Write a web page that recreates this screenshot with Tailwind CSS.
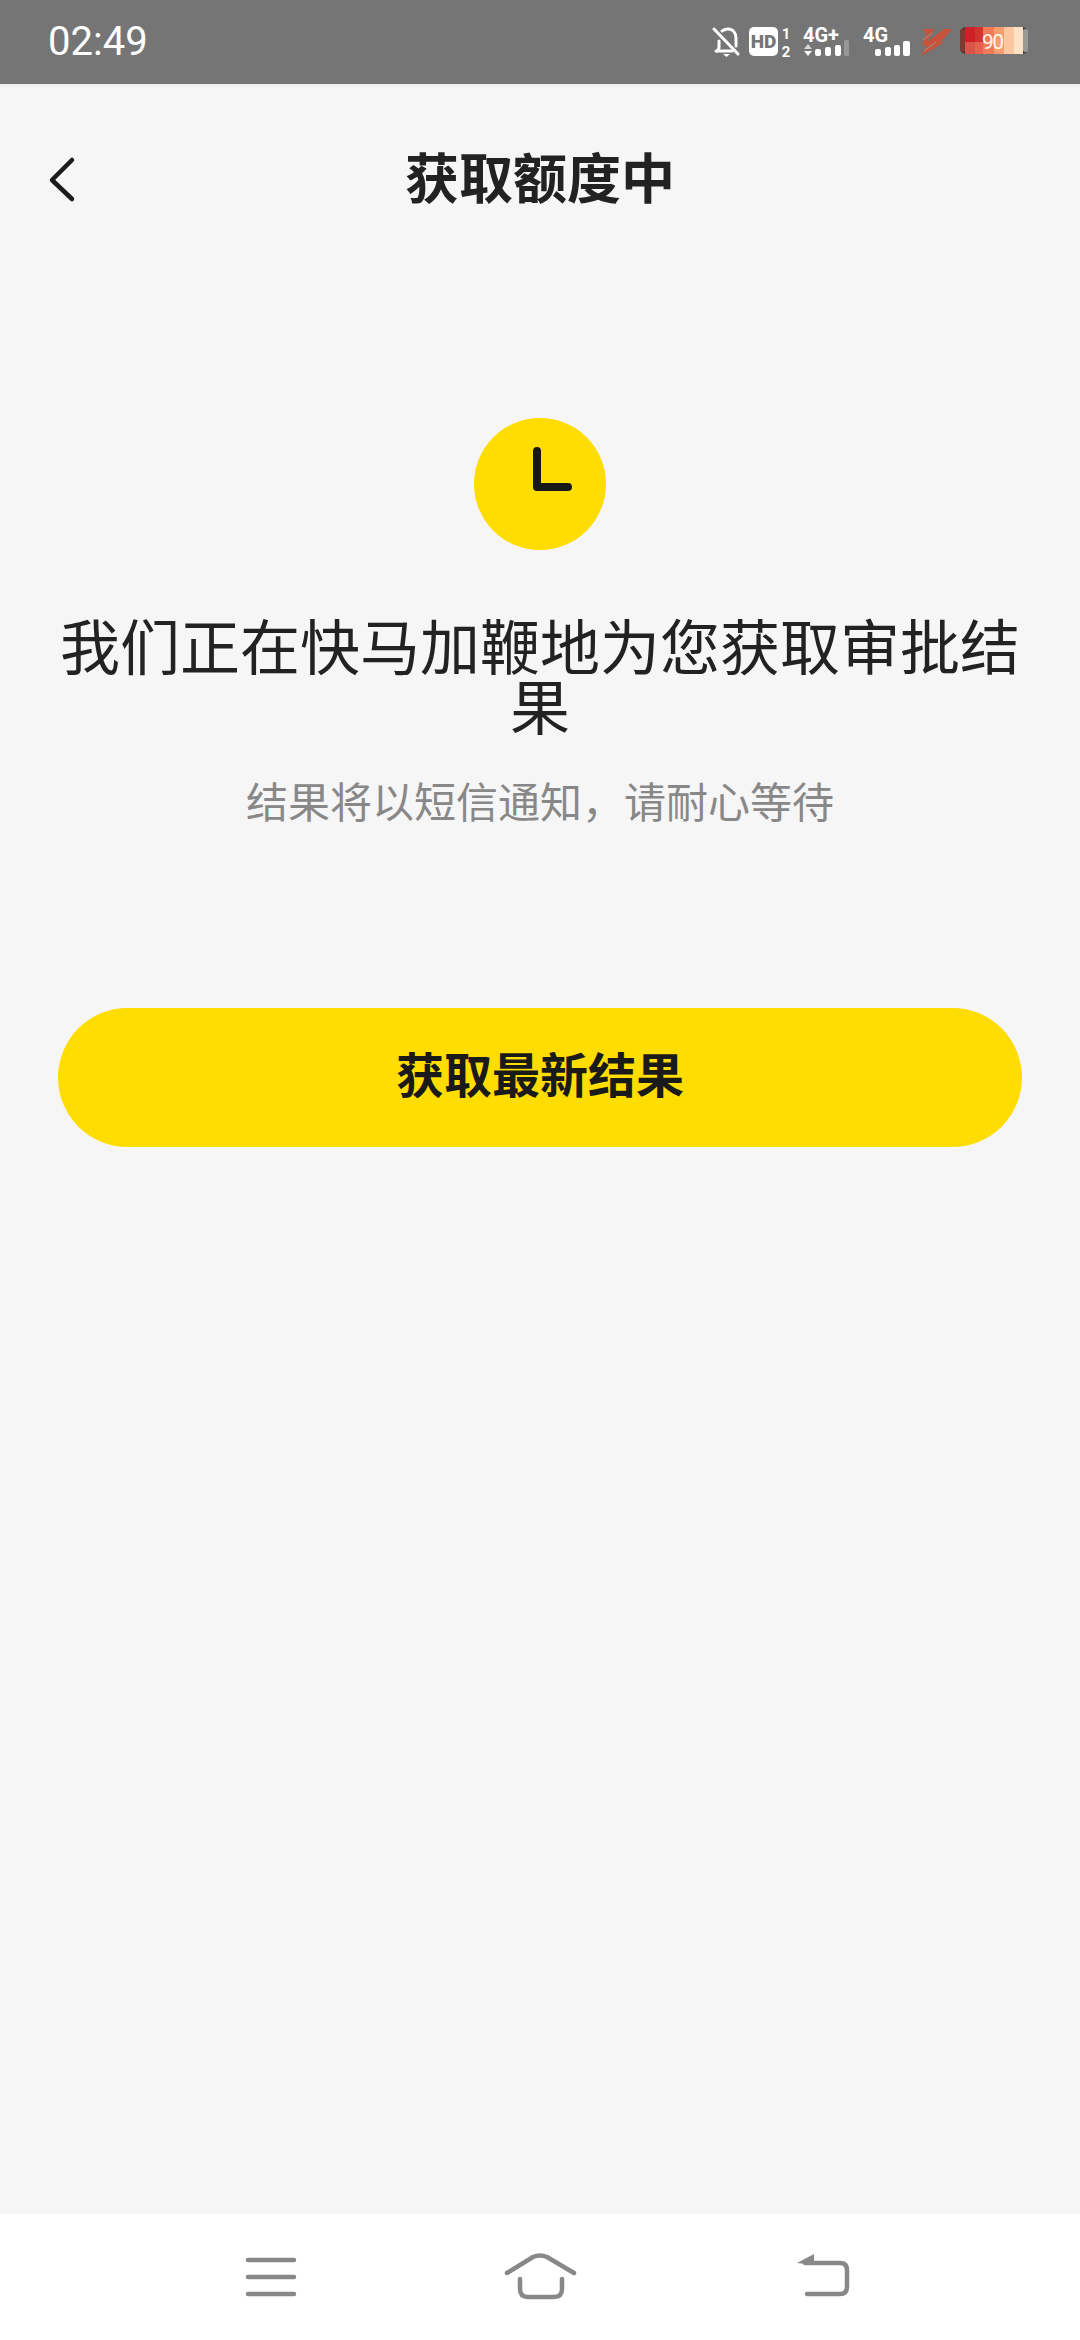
<!DOCTYPE html>
<html lang="zh">
<head>
<meta charset="utf-8">
<script src="https://cdn.jsdelivr.net/npm/@tailwindcss/browser@4"></script>
</head>
<body class="m-0">
<div class="w-[1080px] h-[2340px] flex flex-col bg-[#f6f6f6] overflow-hidden font-['Noto_Sans_CJK_SC',sans-serif]">
  <!-- Status bar -->
  <div class="relative z-10 h-[84px] shrink-0 bg-[#757575] shadow-[0_2px_4px_rgba(0,0,0,0.05)] flex items-center justify-between pl-[48px] pr-[45px]">
    <span class="font-['Roboto',sans-serif] text-[40px] leading-none text-white">02:49</span>
    <svg width="330" height="44" viewBox="0 0 330 44" class="block">
      <!-- bell off -->
      <g fill="none" stroke="#fff" stroke-width="3" stroke-linecap="round" stroke-linejoin="round">
        <path d="M11 31h1.500l1.500-3v-7"/>
        <path d="M17 11q3-2 6-2c5 0 8 4 8 9v8"/>
        <path d="M9 9l24 25"/>
        <path d="M12 31h15"/>
      </g>
      <path d="M18 34h7l-3.500 3z" fill="#fff"/>
      <!-- HD -->
      <rect x="44" y="7" width="29" height="29" rx="5" fill="#fff"/>
      <text x="58.500" y="28" text-anchor="middle" font-family="Roboto" font-weight="900" font-size="19" fill="#757575">HD</text>
      <text x="81" y="19" text-anchor="middle" font-family="Roboto" font-weight="700" font-size="15" fill="#fff">1</text>
      <text x="81" y="37" text-anchor="middle" font-family="Roboto" font-weight="700" font-size="15" fill="#fff">2</text>
      <!-- 4G+ signal -->
      <text x="98" y="22" font-family="Roboto" font-weight="700" font-size="20" fill="#fff">4G+</text>
      <path d="M99 29l4-5 4 5z" fill="#fff" opacity=".7"/>
      <path d="M99 31l4 5 4-5z" fill="#fff"/>
      <rect x="110" y="29" width="6" height="7" rx="2" fill="#fff"/>
      <rect x="120" y="27" width="6" height="9" rx="2" fill="#fff"/>
      <rect x="130" y="25" width="6" height="11" rx="2" fill="#fff"/>
      <rect x="139" y="20" width="5" height="16" rx="1.500" fill="#fff" opacity=".25"/>
      <!-- 4G signal -->
      <text x="158" y="22" font-family="Roboto" font-weight="700" font-size="20" fill="#fff">4G</text>
      <rect x="170" y="29" width="6" height="7" rx="2" fill="#fff"/>
      <rect x="180" y="27" width="6" height="9" rx="2" fill="#fff"/>
      <rect x="189" y="25" width="6" height="11" rx="2" fill="#fff"/>
      <rect x="198" y="21" width="7" height="15" rx="2" fill="#fff"/>
      <!-- bolt -->
      <path d="M218 9H229L222 22L239 9H247L235 23L240 22L216 36L222 25L217 26L221 14Z" fill="#c9523a"/>
      <path d="M218 20l9-7M219 31l12-9" stroke="#a8806f" stroke-width="1.500"/>
      <!-- battery -->
      <rect x="255" y="7" width="68" height="27" rx="6" fill="#3d3636"/>
      <rect x="256" y="11" width="66" height="19" fill="#f5eee6"/>
      <rect x="255" y="9" width="5" height="23" rx="2" fill="#7c3a35"/>
      <rect x="260" y="7" width="10" height="27" fill="#d8554a"/>
      <rect x="260" y="7" width="10" height="15" fill="#cf2027"/>
      <rect x="270" y="7" width="8" height="27" fill="#e4624f"/>
      <rect x="270" y="7" width="8" height="15" fill="#d4322f"/>
      <rect x="278" y="7" width="11" height="27" fill="#f07a58"/>
      <rect x="289" y="7" width="10" height="27" fill="#f79d70"/>
      <rect x="299" y="7" width="10" height="27" fill="#fbc79f"/>
      <rect x="309" y="7" width="9" height="27" fill="#fde2c6"/>
      <rect x="318" y="9" width="5" height="23" rx="2" fill="#9a9a94"/>
      <text x="277" y="29" font-family="Roboto" font-size="21" fill="#fff7ea" textLength="22">90</text>
    </svg>
  </div>

  <!-- Header -->
  <div class="relative h-[190px] shrink-0 flex items-center justify-center">
    <svg width="30" height="48" viewBox="0 0 30 48" class="absolute left-[47px] top-[72px]">
      <path d="M25 4L5 24l20 19" fill="none" stroke="#1b1b1b" stroke-width="4.500" stroke-linecap="round" stroke-linejoin="round"/>
    </svg>
    <span class="pb-[6px] text-[54px] leading-none font-bold text-[#222]">获取额度中</span>
  </div>

  <!-- Main -->
  <div class="flex-1 flex flex-col items-center">
    <div class="mt-[144px] w-[132px] h-[132px] rounded-full bg-[#ffdd00] flex items-center justify-center">
      <svg width="132" height="132" viewBox="0 0 132 132" class="block">
        <path d="M63 33v36h31" fill="none" stroke="#171717" stroke-width="8" stroke-linecap="round" stroke-linejoin="round"/>
      </svg>
    </div>
    <h1 class="mt-[64px] w-[964px] text-center text-[60px] leading-[60px] font-normal text-[#222]">我们正在快马加鞭地为您获取审批结果</h1>
    <p class="mt-[36px] text-[42px] leading-[60px] text-[#888]">结果将以短信通知，请耐心等待</p>
    <button class="mt-[178px] w-[964px] h-[139px] rounded-full bg-[#ffdd00] pb-[11px] text-[48px] leading-none font-bold text-[#1a1a1a]">获取最新结果</button>
  </div>

  <!-- Nav bar -->
  <div class="h-[126px] shrink-0 bg-white relative">
    <svg width="1080" height="126" viewBox="0 0 1080 126" class="block">
      <g fill="none" stroke="#888" stroke-width="4.500" stroke-linecap="round" stroke-linejoin="round">
        <path d="M248 46h46M248 63h46M248 80h46"/>
        <path d="M507 59l26-16q7-3 14 0l27 16"/>
        <path d="M520 65v10q0 8 8 8h26q8 0 8-8v-10"/>
        <path d="M805 49h35q7 0 7 7v17q0 7-7 7h-33"/>
      </g>
      <path d="M797 49l17-9v11z" fill="#888"/>
    </svg>
  </div>
</div>
</body>
</html>
